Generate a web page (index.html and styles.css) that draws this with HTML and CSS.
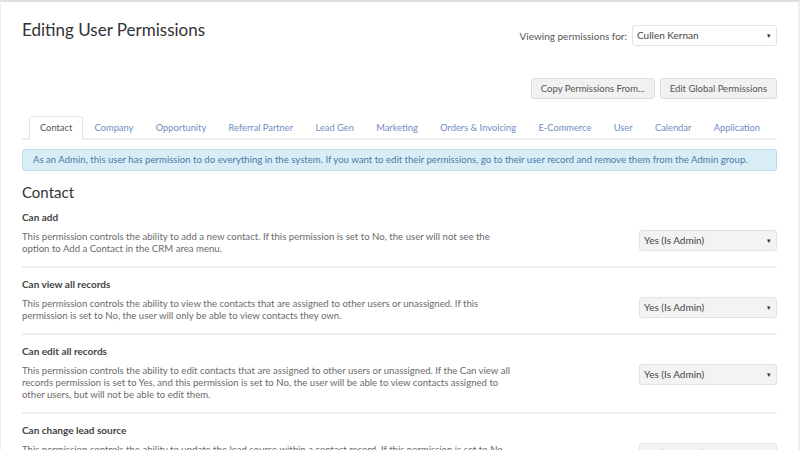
FILE: index.html
```html
<!DOCTYPE html>
<html lang="en">
<head>
    <meta charset="UTF-8">
    <title>Editing User Permissions</title>
    <link rel="stylesheet" href="styles.css">
</head>
<body>
    <div class="page">
        <div class="header">
            <h1>Editing User Permissions</h1>
            <div class="viewing">
                <span class="viewing-label">Viewing permissions for:</span>
                <div class="select user-select">Cullen Kernan<span class="caret">&#9662;</span></div>
            </div>
        </div>

        <div class="actions">
            <button class="btn">Copy Permissions From...</button>
            <button class="btn">Edit Global Permissions</button>
        </div>

        <ul class="tabs">
            <li class="active">Contact</li>
            <li>Company</li>
            <li>Opportunity</li>
            <li>Referral Partner</li>
            <li>Lead Gen</li>
            <li>Marketing</li>
            <li>Orders &amp; Invoicing</li>
            <li>E-Commerce</li>
            <li>User</li>
            <li>Calendar</li>
            <li>Application</li>
        </ul>

        <div class="alert">As an Admin, this user has permission to do everything in the system. If you want to edit their permissions, go to their user record and remove them from the Admin group.</div>

        <h2>Contact</h2>

        <div class="perm">
            <div class="perm-title">Can add</div>
            <div class="perm-body">
                <p>This permission controls the ability to add a new contact. If this permission is set to No, the user will not see the option to Add a Contact in the CRM area menu.</p>
                <div class="select perm-select">Yes (Is Admin)<span class="caret">&#9662;</span></div>
            </div>
        </div>

        <div class="perm">
            <div class="perm-title">Can view all records</div>
            <div class="perm-body">
                <p>This permission controls the ability to view the contacts that are assigned to other users or unassigned. If this permission is set to No, the user will only be able to view contacts they own.</p>
                <div class="select perm-select">Yes (Is Admin)<span class="caret">&#9662;</span></div>
            </div>
        </div>

        <div class="perm">
            <div class="perm-title">Can edit all records</div>
            <div class="perm-body">
                <p>This permission controls the ability to edit contacts that are assigned to other users or unassigned. If the Can view all records permission is set to Yes, and this permission is set to No, the user will be able to view contacts assigned to other users, but will not be able to edit them.</p>
                <div class="select perm-select">Yes (Is Admin)<span class="caret">&#9662;</span></div>
            </div>
        </div>

        <div class="perm">
            <div class="perm-title">Can change lead source</div>
            <div class="perm-body">
                <p>This permission controls the ability to update the lead source within a contact record. If this permission is set to No, the user will not be able to change the lead source of a contact.</p>
                <div class="select perm-select">Yes (Is Admin)<span class="caret">&#9662;</span></div>
            </div>
        </div>
    </div>
</body>
</html>
```

FILE: styles.css
```css
html, body {
    margin: 0;
    padding: 0;
    height: 100%;
    overflow: hidden;
}
body {
    font-family: Lato, "Open Sans", sans-serif;
    background: #fff;
    color: #666;
}
.page {
    box-sizing: border-box;
    min-height: 100%;
    border-top: 2px solid #dedfe3;
    border-left: 1px solid #eceef0;
    border-right: 2px solid #eceef0;
    padding: 0 21px 0 21px;
}
.header {
    display: flex;
    justify-content: space-between;
    align-items: flex-start;
    padding-top: 18px;
}
h1 {
    margin: 0;
    font-size: 17px;
    font-weight: normal;
    color: #333;
    line-height: 20px;
}
.viewing {
    display: flex;
    align-items: center;
    margin-top: 5px;
    font-size: 10px;
}
.viewing-label {
    color: #555;
    margin-right: 5px;
}
.select {
    position: relative;
    box-sizing: border-box;
    height: 21px;
    line-height: 19px;
    border: 1px solid #e3e3e3;
    border-radius: 3px;
    padding: 0 4px;
    color: #444;
}
.caret {
    position: absolute;
    right: 5px;
    top: 0;
    font-size: 7px;
    color: #333;
}
.user-select {
    width: 145px;
    background: #fff;
}
.actions {
    display: flex;
    justify-content: flex-end;
    gap: 5px;
    margin-top: 32px;
}
.btn {
    font-family: inherit;
    font-size: 9.5px;
    color: #555;
    background: #f1f1f1;
    border: 1px solid #dcdcdc;
    border-radius: 3px;
    height: 21px;
    padding: 0 9px;
}
.tabs {
    list-style: none;
    display: flex;
    justify-content: space-between;
    margin: 17px 0 0;
    padding: 0 6px 0 7px;
    border-bottom: 2px solid #eeeff1;
    font-size: 9.3px;
}
.tabs li {
    white-space: nowrap;
    padding: 0 10px;
    line-height: 21px;
    color: #6f8ec0;
    border: 1px solid transparent;
    border-bottom: none;
}
.tabs li.active {
    color: #555;
    border-color: #e6e6e6;
    border-radius: 3px 3px 0 0;
    background: #fff;
    margin-bottom: -2px;
    padding-bottom: 2px;
}
.alert {
    margin-top: 9px;
    background: #d9edf7;
    border: 1px solid #bcdcea;
    border-radius: 3px;
    color: #4a7aa8;
    font-size: 9.6px;
    line-height: 20px;
    padding: 0 10px;
    white-space: nowrap;
}
h2 {
    margin: 12px 0 0;
    font-size: 15px;
    font-weight: normal;
    color: #333;
    line-height: 18px;
}
.perm {
    border-bottom: 2px solid #eeeff1;
    padding: 9px 0 11px;
}
.perm-title {
    font-size: 10px;
    font-weight: bold;
    color: #444;
    line-height: 14px;
}
.perm-body {
    display: flex;
    justify-content: space-between;
    align-items: flex-start;
    margin-top: 7px;
}
.perm-body p {
    margin: 0;
    width: 490px;
    font-size: 9.6px;
    line-height: 12px;
    color: #6b6b6b;
}
.perm-select {
    width: 138px;
    margin-top: -1px;
    background: #f3f3f3;
    font-size: 10px;
}
```
